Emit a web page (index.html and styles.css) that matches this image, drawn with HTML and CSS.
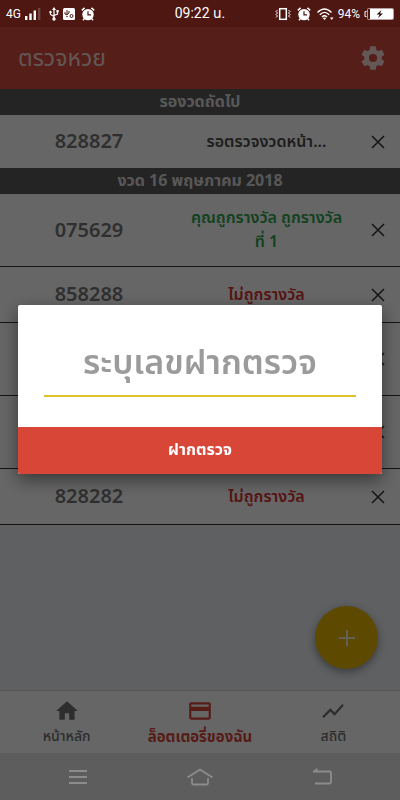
FILE: index.html
```html
<!DOCTYPE html>
<html lang="th">
<head>
<meta charset="utf-8">
<meta name="viewport" content="width=device-width, initial-scale=1">
<title>ตรวจหวย</title>
<link rel="stylesheet" href="styles.css">
</head>
<body>
<svg class="defs" aria-hidden="true">
  <symbol id="close" viewBox="0 0 14 14"><path d="M1 1l12 12M13 1L1 13" fill="none" stroke="currentColor" stroke-width="1.5"/></symbol>
  <symbol id="alarm" viewBox="0 0 14 14"><circle cx="7" cy="7.6" r="5.7" fill="currentColor"/><path d="M.8 3.4L3.6.9M13.2 3.4L10.4.9M3.2 11.8L2 13.2M10.8 11.8l1.2 1.4" stroke="currentColor" stroke-width="1.5"/><path d="M7 4.3v3.6h3" fill="none" stroke="#4e1712" stroke-width="1.2"/></symbol>
</svg>
<div class="app">
  <div class="status">
    <div class="status-side">
      <span>4G</span>
      <svg class="signal" width="16" height="14" viewBox="0 0 16 14"><path d="M0 9h2.4v4H0zM4.3 6.500h2.400V13H4.300zM8.600 3.500H11V13H8.600z" fill="currentColor"/><path d="M13 1h2.400v12H13z" fill="#734440"/></svg>
      <svg class="usb" width="10" height="14" viewBox="0 0 10 14"><path d="M5 2v10M1.500 5v2.500L5 9.500M8.500 4v3L5 8.500" fill="none" stroke="currentColor" stroke-width="1.200"/><path d="M5 0L3 3h4z" fill="currentColor"/><circle cx="5" cy="12" r="1.700" fill="currentColor"/><circle cx="1.500" cy="5" r="1.200" fill="currentColor"/><path d="M7.400 3h2.300v2.300H7.400z" fill="currentColor"/></svg>
      <svg width="12" height="14" viewBox="0 0 12 14"><rect y="1" width="12" height="12" rx="1.500" fill="currentColor"/><path d="M4 3v5M2 5v2l2 1M6 4v2L4 7.500" stroke="#4e1712" fill="none"/><circle cx="8.500" cy="9" r="1.500" fill="none" stroke="#4e1712"/><path d="M3 9l1 1.500L5 9z" fill="#4e1712"/></svg>
      <svg class="alarm" width="14" height="14"><use href="#alarm"/></svg>
    </div>
    <span class="clock">09:22 น.</span>
    <div class="status-side right">
      <svg width="16" height="14" viewBox="0 0 16 14"><rect x="4.700" y="1.700" width="6.600" height="10.600" fill="none" stroke="currentColor" stroke-width="1.500"/><path d="M2.500 3L1 4.500 2.500 6 1 7.500 2.500 9 1 10.500M13.500 3L15 4.500 13.500 6 15 7.500 13.500 9l1.500 1.500" fill="none" stroke="currentColor"/></svg>
      <svg class="alarm" width="14" height="14"><use href="#alarm"/></svg>
      <svg class="wifi" width="17" height="14" viewBox="0 0 17 14"><path d="M.5 5.500Q7.500-1.500 14.500 5.500M2.800 7.800Q7.500 3 12.200 7.800M5 10Q7.500 7.500 10 10" fill="none" stroke="currentColor" stroke-width="1.400"/><path d="M5.800 11l1.700 2 1.700-2q-1.700-1-3.400 0zM13 10.500h3.500L14.700 13z" fill="currentColor"/></svg>
      <span>94%</span>
      <svg width="30" height="14" viewBox="0 0 30 14"><path d="M2.500 4.500H1v5h1.500" fill="none" stroke="currentColor"/><rect x="3.500" y="1.500" width="26" height="11" rx="1" fill="none" stroke="#b9a3a1"/><path d="M6 2h23v10H6z" fill="currentColor"/><path d="M17.500 3l-5 4.500h3L14 11l5-4.500h-3z" fill="#241010"/></svg>
    </div>
  </div>
  <header class="topbar">
    <h1>ตรวจหวย</h1>
    <button class="icon-btn" aria-label="ตั้งค่า"><svg width="28" height="28" viewBox="0 0 24 24"><path fill="currentColor" d="M19.430 12.980c.04-.32.07-.64.07-.98s-.03-.66-.07-.98l2.110-1.650c.19-.15.24-.42.12-.64l-2-3.460c-.12-.22-.39-.3-.61-.22l-2.490 1c-.52-.4-1.080-.73-1.690-.98l-.38-2.650C14.460 2.180 14.250 2 14 2h-4c-.25 0-.46.18-.49.42l-.38 2.650c-.61.25-1.170.59-1.690.98l-2.490-1c-.23-.09-.49 0-.61.22l-2 3.460c-.13.22-.07.49.12.64l2.110 1.650c-.04.32-.07.65-.07.98s.03.66.07.98l-2.110 1.650c-.19.15-.24.42-.12.64l2 3.460c.12.22.39.3.61.22l2.490-1c.52.4 1.080.73 1.690.98l.38 2.650c.03.24.24.42.49.42h4c.25 0 .46-.18.49-.42l.38-2.650c.61-.25 1.170-.59 1.690-.98l2.490 1c.23.09.49 0 .61-.22l2-3.460c.12-.22.07-.49-.12-.64l-2.110-1.650zM12 15.500a3.500 3.500 0 1 1 0-7 3.500 3.500 0 0 1 0 7z"/></svg></button>
  </header>
  <main>
    <h2>รองวดถัดไป</h2>
    <ul>
      <li class="row"><span class="number">828827</span><span class="result">รอตรวจงวดหน้า...</span><button class="icon-btn remove" aria-label="ลบ"><svg width="14" height="14"><use href="#close"/></svg></button></li>
    </ul>
    <h2>งวด 16 พฤษภาคม 2018</h2>
    <ul>
      <li class="row tall"><span class="number">075629</span><span class="result win">คุณถูกรางวัล ถูกรางวัลที่ 1</span><button class="icon-btn remove" aria-label="ลบ"><svg width="14" height="14"><use href="#close"/></svg></button></li>
      <li class="row"><span class="number">858288</span><span class="result lose">ไม่ถูกรางวัล</span><button class="icon-btn remove" aria-label="ลบ"><svg width="14" height="14"><use href="#close"/></svg></button></li>
      <li class="row tall"><span></span><span></span><button class="icon-btn remove" aria-label="ลบ"><svg width="14" height="14"><use href="#close"/></svg></button></li>
      <li class="row tall"><span></span><span></span><button class="icon-btn remove" aria-label="ลบ"><svg width="14" height="14"><use href="#close"/></svg></button></li>
      <li class="row"><span class="number">828282</span><span class="result lose">ไม่ถูกรางวัล</span><button class="icon-btn remove" aria-label="ลบ"><svg width="14" height="14"><use href="#close"/></svg></button></li>
    </ul>
    <button class="fab" aria-label="เพิ่ม"><svg width="16" height="16" viewBox="0 0 16 16"><path d="M8 0v16M0 8h16" stroke="currentColor" stroke-width="2"/></svg></button>
  </main>
  <nav class="tabs">
    <a href="#home"><svg width="26" height="26" viewBox="0 0 24 24"><path fill="currentColor" d="M10 20v-6h4v6h5v-8h3L12 3 2 12h3v8z"/></svg><span>หน้าหลัก</span></a>
    <a href="#mine" class="active"><svg width="26" height="26" viewBox="0 0 24 24"><path fill="currentColor" d="M20 4H4c-1.110 0-1.990.89-1.990 2L2 18c0 1.110.89 2 2 2h16c1.110 0 2-.89 2-2V6c0-1.110-.89-2-2-2zm0 14H4v-6h16v6zm0-10H4V6h16v2z"/></svg><span>ล็อตเตอรี่ของฉัน</span></a>
    <a href="#stats"><svg width="26" height="26" viewBox="0 0 24 24"><path fill="currentColor" d="M3.500 18.490l6-6.010 4 4L22 6.920l-1.410-1.410-7.090 7.970-4-4L2 16.990z"/></svg><span>สถิติ</span></a>
  </nav>
  <div class="system">
    <svg width="20" height="20" viewBox="0 0 20 20"><path d="M1 4h18M1 10h18M1 16h18" stroke="currentColor" stroke-width="1.800"/></svg>
    <svg width="28" height="20" viewBox="0 0 28 20"><path d="M1.500 10.500L14 2.500l12.500 8M6 11v5q0 1.500 1.500 1.500h13Q22 17.500 22 16v-5" fill="none" stroke="currentColor" stroke-width="1.800"/></svg>
    <svg width="20" height="20" viewBox="0 0 20 20"><path d="M1 4.500h16.500q1.500 0 1.500 1.500v9q0 1.500-1.500 1.500H3M1.500 5L5.500 2" fill="none" stroke="currentColor" stroke-width="1.800"/></svg>
  </div>
</div>
<div class="backdrop">
  <form class="dialog" role="dialog" aria-modal="true">
    <div class="field"><input type="text" placeholder="ระบุเลขฝากตรวจ" aria-label="ระบุเลขฝากตรวจ"></div>
    <button class="submit" type="button">ฝากตรวจ</button>
  </form>
</div>
</body>
</html>
```

FILE: styles.css
```css
* { box-sizing: border-box; }

body {
  margin: 0;
  font-family: "Noto Sans", "Noto Sans Thai", "Sarabun", sans-serif;
  font-size: 16px;
  color: #4d4d4d;
}

svg { display: block; flex: none; }
.defs { position: absolute; width: 0; height: 0; }
h1, h2, ul { margin: 0; padding: 0; list-style: none; }
button, input { font: inherit; border: 0; margin: 0; }

.app {
  display: flex;
  flex-direction: column;
  min-height: 100vh;
  background: #ebeff4;
}

/* The status bar stays lit above the backdrop. */
.status {
  position: relative;
  z-index: 3;
  display: flex;
  align-items: center;
  height: 27px;
  padding: 0 6px;
  background: #4e1712;
  color: #fff;
  font-family: Roboto, "Noto Sans Thai", sans-serif;
  font-size: 12px;
}
.status-side { flex: 1; display: flex; align-items: center; gap: 4px; }
.status-side .usb { margin-left: 4px; }
.status-side .alarm { margin-left: 2px; }
.status-side .wifi { margin-left: 2px; }
.right { justify-content: flex-end; }
.clock { font-size: 14px; }

.topbar {
  display: flex;
  align-items: center;
  justify-content: space-between;
  height: 62px;
  padding: 0 13px 0 18px;
  background: #d84b3c;
  color: #fffc;
}
.topbar h1 { font-size: 23px; font-weight: 400; }

.icon-btn {
  display: flex;
  align-items: center;
  justify-content: center;
  padding: 0;
  background: none;
  color: inherit;
}

main { flex: 1; position: relative; }

h2 {
  height: 26px;
  background: #5a5a5a;
  color: #fffc;
  font-size: 16px;
  line-height: 24px;
  font-weight: 700;
  text-align: center;
}

.row {
  display: grid;
  grid-template-columns: 178fr 177fr 45fr;
  align-items: center;
  min-height: 56px;
  background: #fff;
  border-bottom: 1px solid #333;
  text-align: center;
}
ul:first-of-type .row { min-height: 53px; border-bottom: 0; }
.row.tall { min-height: 73px; }
.number { padding-bottom: 2px; font-size: 20px; font-weight: 600; color: #777; }
.result { padding: 0 8px 2px; font-size: 16px; line-height: 24px; font-weight: 600; }
.win { color: #2da34f; }
.lose { color: #d83030; }
.remove { height: 40px; color: #333; }

.fab {
  position: absolute;
  right: 22px;
  bottom: 21px;
  display: flex;
  align-items: center;
  justify-content: center;
  width: 63px;
  height: 63px;
  padding: 0;
  border-radius: 50%;
  background: #e8b900;
  color: #fffc;
  box-shadow: 0 3px 8px #0006;
}

.tabs {
  display: grid;
  grid-template-columns: repeat(3, 1fr);
  height: 63px;
  padding-top: 2px;
  background: #fff;
  border-top: 1px solid #d5d8db;
}
.tabs a {
  display: flex;
  flex-direction: column;
  align-items: center;
  justify-content: center;
  color: #707070;
  font-size: 14px;
  line-height: 24px;
  font-weight: 500;
  text-decoration: none;
  white-space: nowrap;
}
.tabs .active { color: #d84638; font-size: 15px; font-weight: 700; }

.system {
  display: flex;
  align-items: center;
  justify-content: space-between;
  height: 47px;
  padding: 0 68px;
  background: #e8e8e8;
}
.system svg { position: relative; z-index: 3; color: #8c8c8c; }

.backdrop {
  position: fixed;
  inset: 0;
  z-index: 2;
  display: flex;
  align-items: center;
  padding: 0 18px;
  background: rgba(0, 0, 0, 0.6);
}
.dialog {
  flex: 1;
  min-width: 0;
  margin-bottom: 21px;
  border-radius: 2px;
  overflow: hidden;
  background: #fff;
  box-shadow: 0 6px 18px #0007;
}
.field { padding: 28px 26px 30px; }
.field input {
  display: block;
  width: 100%;
  height: 64px;
  padding: 0 0 6px;
  border-bottom: 2px solid #dfc02d;
  background: none;
  outline: 0;
  font-size: 34px;
  font-weight: 600;
  text-align: center;
}
.field input::placeholder { color: #9b9b9b; opacity: 1; }
.submit {
  display: block;
  width: 100%;
  height: 47px;
  padding: 0 0 2px;
  background: #d84638;
  color: #fff;
  font-size: 16px;
  font-weight: 700;
}
```
